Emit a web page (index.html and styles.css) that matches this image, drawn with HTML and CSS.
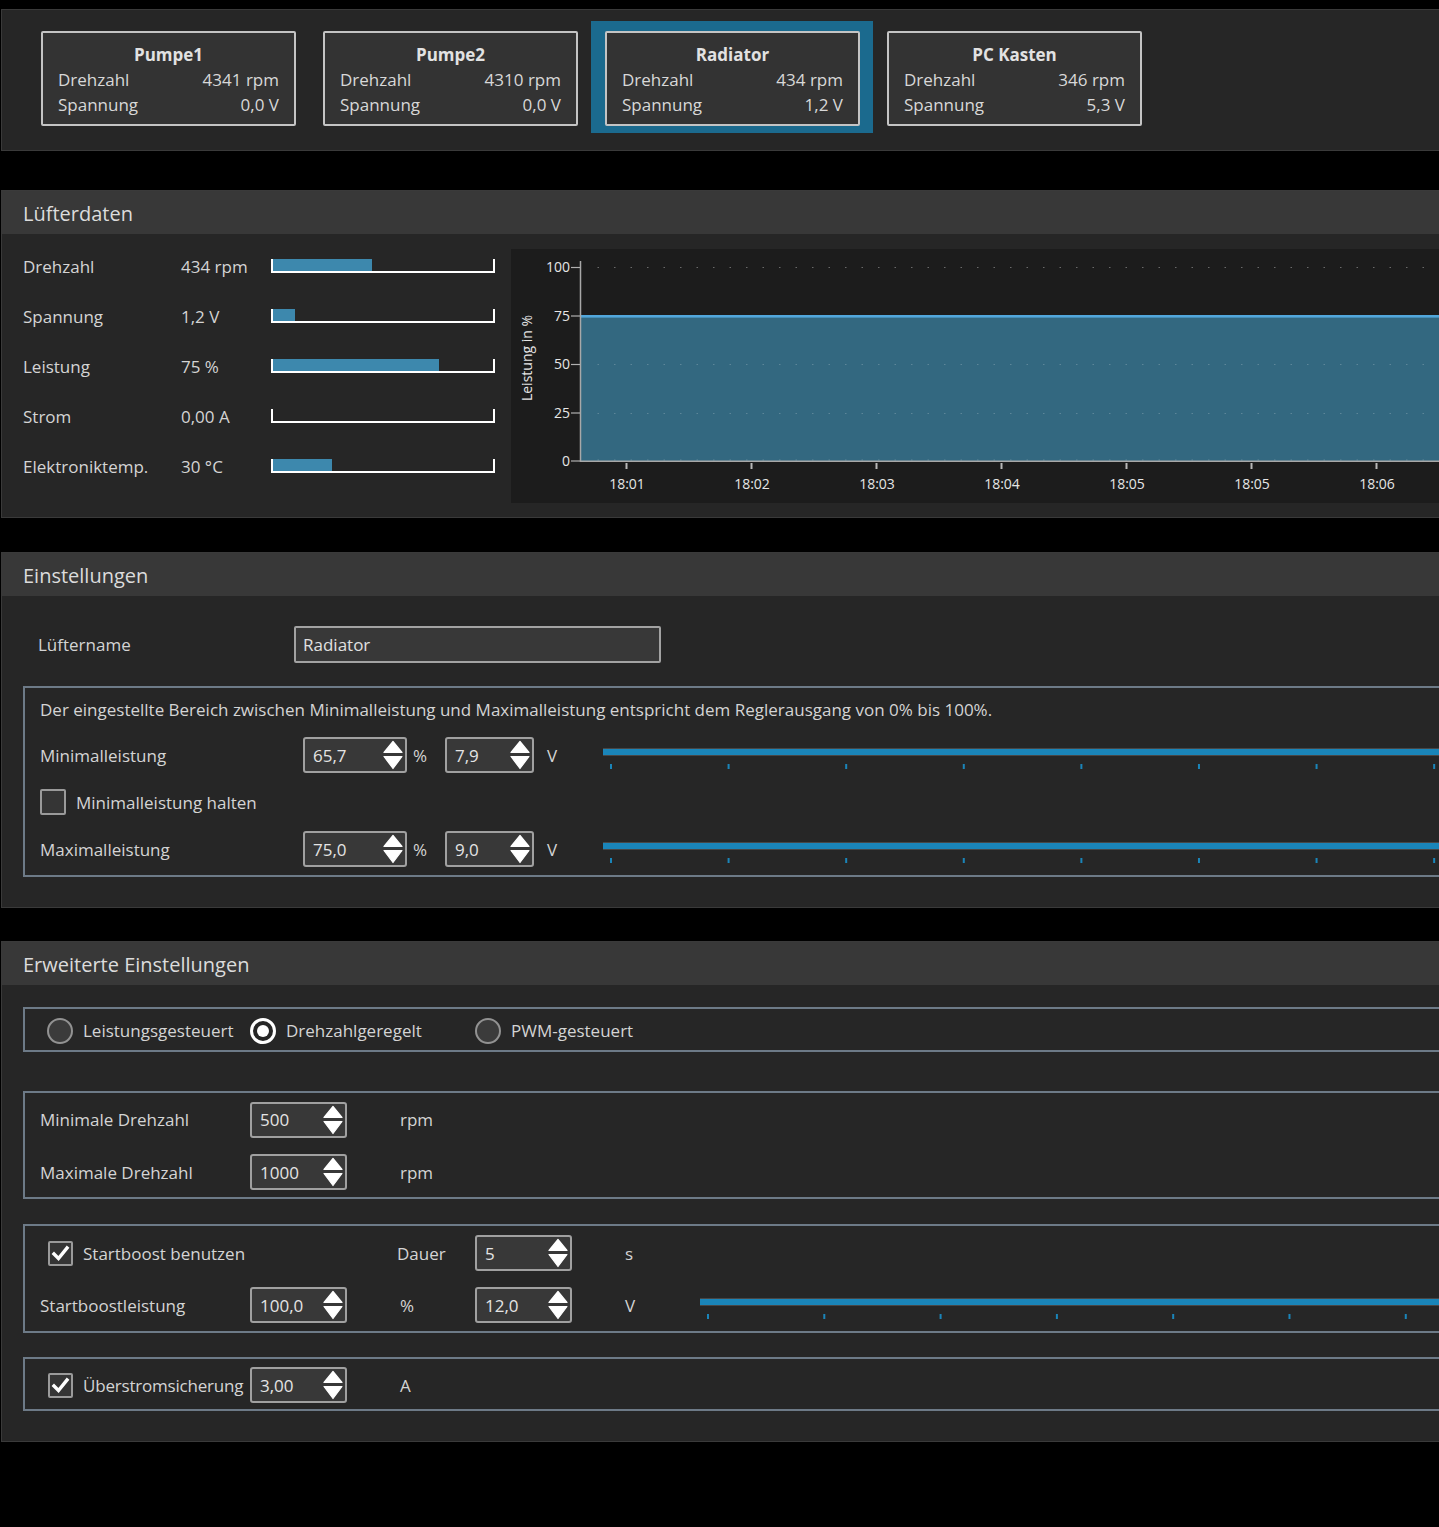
FILE: index.html
```html
<!DOCTYPE html>
<html lang="de">
<head>
<meta charset="utf-8">
<title>Lüftersteuerung</title>
<link rel="stylesheet" href="styles.css">
</head>
<body>
<div class="page">

  <section class="panel top">
    <div class="cards">
      <div class="slot">
        <div class="card">
          <div class="card-title">Pumpe1</div>
          <div class="card-row"><span>Drehzahl</span><span>4341 rpm</span></div>
          <div class="card-row"><span>Spannung</span><span>0,0 V</span></div>
        </div>
      </div>
      <div class="slot">
        <div class="card">
          <div class="card-title">Pumpe2</div>
          <div class="card-row"><span>Drehzahl</span><span>4310 rpm</span></div>
          <div class="card-row"><span>Spannung</span><span>0,0 V</span></div>
        </div>
      </div>
      <div class="slot selected">
        <div class="card">
          <div class="card-title">Radiator</div>
          <div class="card-row"><span>Drehzahl</span><span>434 rpm</span></div>
          <div class="card-row"><span>Spannung</span><span>1,2 V</span></div>
        </div>
      </div>
      <div class="slot">
        <div class="card">
          <div class="card-title">PC Kasten</div>
          <div class="card-row"><span>Drehzahl</span><span>346 rpm</span></div>
          <div class="card-row"><span>Spannung</span><span>5,3 V</span></div>
        </div>
      </div>
    </div>
  </section>

  <section class="panel data">
    <header class="panel-head">Lüfterdaten</header>
    <div class="data-body">
      <div class="metrics">
        <div class="metric"><span>Drehzahl</span><span>434 rpm</span><div class="bar"><div class="fill" style="width:45%"></div></div></div>
        <div class="metric"><span>Spannung</span><span>1,2 V</span><div class="bar"><div class="fill" style="width:10%"></div></div></div>
        <div class="metric"><span>Leistung</span><span>75 %</span><div class="bar"><div class="fill" style="width:75.5%"></div></div></div>
        <div class="metric"><span>Strom</span><span>0,00 A</span><div class="bar"><div class="fill" style="width:0%"></div></div></div>
        <div class="metric"><span>Elektroniktemp.</span><span>30 °C</span><div class="bar"><div class="fill" style="width:27%"></div></div></div>
      </div>
      <div class="chart">
        <svg class="chart-svg" width="1000" height="254" viewBox="0 0 1000 254">
          <rect x="70" y="68" width="930" height="144" fill="#336880"/>
          <rect x="70" y="66" width="930" height="2.6" fill="#52a7db"/>
          <g stroke-dasharray="1.5 15" stroke-width="1">
            <line x1="86.5" y1="18.5" x2="1000" y2="18.5" stroke="#6a6a6a"/>
            <line x1="86.5" y1="115.5" x2="1000" y2="115.5" stroke="#5d8699"/>
            <line x1="86.5" y1="164.5" x2="1000" y2="164.5" stroke="#5d8699"/>
            <line x1="86.5" y1="211" x2="1000" y2="211" stroke="#5d8699"/>
          </g>
          <line x1="69.5" y1="12" x2="69.5" y2="213" stroke="#a8a8a8" stroke-width="1.5"/>
          <line x1="69" y1="212.3" x2="1000" y2="212.3" stroke="#a8a8a8" stroke-width="1.5"/>
          <g stroke="#b0b0b0" stroke-width="1.2">
            <line x1="60" y1="18.5" x2="69" y2="18.5"/>
            <line x1="60" y1="67" x2="69" y2="67"/>
            <line x1="60" y1="115.5" x2="69" y2="115.5"/>
            <line x1="60" y1="164" x2="69" y2="164"/>
            <line x1="60" y1="212" x2="69" y2="212"/>
          </g>
          <g stroke="#b8b8b8" stroke-width="2">
            <line x1="115.5" y1="214" x2="115.5" y2="220"/>
            <line x1="240.5" y1="214" x2="240.5" y2="220"/>
            <line x1="365.5" y1="214" x2="365.5" y2="220"/>
            <line x1="490.5" y1="214" x2="490.5" y2="220"/>
            <line x1="615.5" y1="214" x2="615.5" y2="220"/>
            <line x1="740.5" y1="214" x2="740.5" y2="220"/>
            <line x1="865.5" y1="214" x2="865.5" y2="220"/>
          </g>
          <g class="ax" text-anchor="end">
            <text x="59" y="23">100</text>
            <text x="59" y="71.5">75</text>
            <text x="59" y="120">50</text>
            <text x="59" y="168.5">25</text>
            <text x="59" y="217">0</text>
          </g>
          <g class="ax" text-anchor="middle">
            <text x="116" y="240">18:01</text>
            <text x="241" y="240">18:02</text>
            <text x="366" y="240">18:03</text>
            <text x="491" y="240">18:04</text>
            <text x="616" y="240">18:05</text>
            <text x="741" y="240">18:05</text>
            <text x="866" y="240">18:06</text>
          </g>
          <text class="ax" text-anchor="middle" transform="translate(21 109) rotate(-90)">Leistung in %</text>
        </svg>
      </div>
    </div>
  </section>

  <section class="panel settings">
    <header class="panel-head">Einstellungen</header>
    <div class="settings-body">
      <div class="name-row">
        <span class="name-label">Lüftername</span>
        <div class="textbox">Radiator</div>
      </div>
      <div class="group range-group">
        <div class="hint">Der eingestellte Bereich zwischen Minimalleistung und Maximalleistung entspricht dem Reglerausgang von 0% bis 100%.</div>
        <div class="range-row first">
          <span class="rl">Minimalleistung</span>
          <div class="spin w104"><span>65,7</span><svg class="arr" width="20" height="30" viewBox="0 0 20 30"><polygon points="10,1.5 19,12.5 1,12.5"/><polygon points="1,16.5 19,16.5 10,28.5"/></svg></div>
          <span class="u1">%</span>
          <div class="spin w89"><span>7,9</span><svg class="arr" width="20" height="30" viewBox="0 0 20 30"><polygon points="10,1.5 19,12.5 1,12.5"/><polygon points="1,16.5 19,16.5 10,28.5"/></svg></div>
          <span class="u2">V</span>
          <div class="slider"><div class="track"></div><div class="ticks t1"></div></div>
        </div>
        <div class="check-row">
          <span class="cb"></span><span class="cb-label">Minimalleistung halten</span>
        </div>
        <div class="range-row">
          <span class="rl">Maximalleistung</span>
          <div class="spin w104"><span>75,0</span><svg class="arr" width="20" height="30" viewBox="0 0 20 30"><polygon points="10,1.5 19,12.5 1,12.5"/><polygon points="1,16.5 19,16.5 10,28.5"/></svg></div>
          <span class="u1">%</span>
          <div class="spin w89"><span>9,0</span><svg class="arr" width="20" height="30" viewBox="0 0 20 30"><polygon points="10,1.5 19,12.5 1,12.5"/><polygon points="1,16.5 19,16.5 10,28.5"/></svg></div>
          <span class="u2">V</span>
          <div class="slider"><div class="track"></div><div class="ticks t1"></div></div>
        </div>
      </div>
    </div>
  </section>

  <section class="panel advanced">
    <header class="panel-head">Erweiterte Einstellungen</header>
    <div class="adv-body">
      <div class="group radio-group">
        <label class="radio-item r1"><span class="radio"></span>Leistungsgesteuert</label>
        <label class="radio-item r2"><span class="radio on"></span>Drehzahlgeregelt</label>
        <label class="radio-item"><span class="radio"></span>PWM-gesteuert</label>
      </div>

      <div class="group rpm-group">
        <div class="row">
          <span class="lc">Minimale Drehzahl</span>
          <div class="spin w97"><span>500</span><svg class="arr" width="20" height="30" viewBox="0 0 20 30"><polygon points="10,1.5 19,12.5 1,12.5"/><polygon points="1,16.5 19,16.5 10,28.5"/></svg></div>
          <span class="uc">rpm</span>
        </div>
        <div class="row gap">
          <span class="lc">Maximale Drehzahl</span>
          <div class="spin w97"><span>1000</span><svg class="arr" width="20" height="30" viewBox="0 0 20 30"><polygon points="10,1.5 19,12.5 1,12.5"/><polygon points="1,16.5 19,16.5 10,28.5"/></svg></div>
          <span class="uc">rpm</span>
        </div>
      </div>

      <div class="group boost-group">
        <div class="row">
          <div class="cbwrap wide"><span class="cb on"><svg width="21" height="21" viewBox="0 0 21 21"><path d="M4 11 L8.5 15.5 L17 5"/></svg></span><span class="cb-label">Startboost benutzen</span></div>
          <span class="dauer">Dauer</span>
          <div class="spin w97"><span>5</span><svg class="arr" width="20" height="30" viewBox="0 0 20 30"><polygon points="10,1.5 19,12.5 1,12.5"/><polygon points="1,16.5 19,16.5 10,28.5"/></svg></div>
          <span class="uc">s</span>
        </div>
        <div class="row gap">
          <span class="lc">Startboostleistung</span>
          <div class="spin w97"><span>100,0</span><svg class="arr" width="20" height="30" viewBox="0 0 20 30"><polygon points="10,1.5 19,12.5 1,12.5"/><polygon points="1,16.5 19,16.5 10,28.5"/></svg></div>
          <span class="uc fix">%</span>
          <div class="spin w97"><span>12,0</span><svg class="arr" width="20" height="30" viewBox="0 0 20 30"><polygon points="10,1.5 19,12.5 1,12.5"/><polygon points="1,16.5 19,16.5 10,28.5"/></svg></div>
          <span class="uc fix">V</span>
          <div class="slider"><div class="track"></div><div class="ticks t2"></div></div>
        </div>
      </div>

      <div class="group oc-group">
        <div class="row">
          <div class="cbwrap narrow"><span class="cb on"><svg width="21" height="21" viewBox="0 0 21 21"><path d="M4 11 L8.5 15.5 L17 5"/></svg></span><span class="cb-label tight">Überstromsicherung</span></div>
          <div class="spin w97"><span>3,00</span><svg class="arr" width="20" height="30" viewBox="0 0 20 30"><polygon points="10,1.5 19,12.5 1,12.5"/><polygon points="1,16.5 19,16.5 10,28.5"/></svg></div>
          <span class="uc">A</span>
        </div>
      </div>
    </div>
  </section>

</div>
</body>
</html>
```

FILE: styles.css
```css
* { box-sizing: border-box; }

html, body {
  margin: 0;
  background: #000;
}

body {
  width: 1439px;
  height: 1527px;
  overflow: hidden;
  font-family: "Open Sans", "Noto Sans", sans-serif;
  font-size: 17px;
  color: #d4d4d4;
}

.page {
  padding: 9px 0 0 1px;
  width: 1560px;
}

.panel {
  background: #262626;
  border: 1px solid #3a3a3a;
  border-right: none;
  width: 1520px;
}

.panel-head {
  height: 43px;
  line-height: 45px;
  background: #383838;
  padding-left: 21px;
  font-size: 20px;
  color: #dcdcdc;
}

/* ---------- top cards ---------- */
.top {
  height: 142px;
  padding: 11px 0 0 25px;
}

.cards { display: flex; }

.slot {
  width: 282px;
  height: 112px;
  padding: 10px 13px 7px 14px;
}

.slot.selected { background: #1b6a8e; }

.card {
  height: 95px;
  border: 2px solid #c4c4c4;
  border-radius: 2px;
  background: #333333;
  padding: 9px 15px 0;
  line-height: 25px;
  color: #d8d8d8;
}

.card-title {
  text-align: center;
  font-weight: 700;
  color: #e2e2e2;
}

.card-row {
  display: flex;
  justify-content: space-between;
}

/* ---------- Lüfterdaten ---------- */
.data { margin-top: 39px; }

.data-body {
  display: flex;
  padding: 0 0 14px 21px;
}

.metrics {
  width: 474px;
  padding-top: 7px;
}

.metric {
  display: grid;
  grid-template-columns: 158px 90px 224px;
  align-items: center;
  height: 50px;
}

.bar {
  height: 14px;
  border: 2px solid #ffffff;
  border-top: none;
}

.fill {
  height: 12px;
  background: #3d88ad;
}

.chart {
  flex: 1;
  margin: 15px 0 0 14px;
  height: 254px;
  background: #1c1c1c;
  overflow: hidden;
}

.chart-svg { display: block; }

.ax {
  font-family: "Open Sans", "Noto Sans", sans-serif;
  font-size: 14px;
  fill: #e6e6e6;
}

/* ---------- Einstellungen ---------- */
.settings { margin-top: 34px; }

.settings-body { padding: 30px 0 30px 0; }

.name-row {
  display: flex;
  align-items: center;
  padding-left: 36px;
}

.name-label { width: 256px; }

.textbox {
  width: 367px;
  height: 37px;
  border: 2px solid #a2a2a2;
  border-radius: 2px;
  background: #383838;
  padding-left: 7px;
  line-height: 34px;
  color: #e0e0e0;
}

.group {
  margin-left: 21px;
  border: 2px solid #6d7a87;
  border-right: none;
}

.range-group {
  margin-top: 23px;
  padding: 10px 0 8px 15px;
}

.hint { line-height: 24px; }

.range-row {
  display: flex;
  align-items: flex-start;
  height: 36px;
  margin-top: 16px;
}

.range-row.first { margin-top: 15px; }

.range-row > span { line-height: 37px; }

.rl { width: 263px; }
.u1 { width: 38px; padding-left: 6px; }
.u2 { width: 69px; padding-left: 13px; }

.spin {
  display: flex;
  align-items: center;
  justify-content: space-between;
  height: 36px;
  border: 2px solid #a0a0a0;
  border-radius: 3px;
  background: #383838;
  padding: 0 2px 0 8px;
  color: #e4e4e4;
}

.w104 { width: 104px; }
.w89 { width: 89px; }
.w97 { width: 97px; }

.arr { display: block; }
.arr polygon {
  fill: #ffffff;
  stroke: #ffffff;
  stroke-width: 1.2;
  stroke-linejoin: round;
}

.slider {
  flex: 1;
  height: 36px;
  padding-top: 11px;
}

.track {
  height: 8px;
  border-top: 1px solid #474747;
  border-bottom: 1px solid #474747;
  background: #1a85b9;
}

.ticks {
  height: 5px;
  margin-top: 8px;
  background-repeat: repeat-x;
  background-position: 7px 0;
}

.t1 {
  background-image: linear-gradient(90deg, #1a85b9 0 1.6px, transparent 1.6px);
  background-size: 117.6px 5px;
}

.t2 {
  background-image: linear-gradient(90deg, #1a85b9 0 1.6px, transparent 1.6px);
  background-size: 116.3px 5px;
}

.check-row {
  display: flex;
  align-items: center;
  height: 26px;
  margin-top: 16px;
}

.cb {
  width: 26px;
  height: 26px;
  border: 2px solid #9a9a9a;
  border-radius: 2px;
  background: #353535;
  flex: none;
}

.cb.on {
  width: 25px;
  height: 25px;
  display: flex;
  align-items: center;
  justify-content: center;
}

.cb.on svg path {
  fill: none;
  stroke: #ffffff;
  stroke-width: 3.4;
  stroke-linecap: square;
}

.cb-label { margin-left: 10px; }
.cb-label.tight { letter-spacing: -0.2px; }

/* ---------- Erweiterte Einstellungen ---------- */
.advanced { margin-top: 33px; }

.adv-body { padding: 22px 0 30px 0; }

.radio-group {
  display: flex;
  align-items: center;
  height: 45px;
  padding: 2px 0 0 22px;
}

.radio-item {
  display: flex;
  align-items: center;
}

.r1 { width: 203px; }
.r2 { width: 225px; }

.radio {
  width: 26px;
  height: 26px;
  border-radius: 50%;
  border: 2px solid #929292;
  background: #3b3b3b;
  margin-right: 10px;
  flex: none;
}

.radio.on {
  border: 3px solid #ffffff;
  background: #262626;
  display: flex;
  align-items: center;
  justify-content: center;
}

.radio.on::after {
  content: "";
  width: 12px;
  height: 12px;
  border-radius: 50%;
  background: #ffffff;
}

.row {
  display: flex;
  align-items: center;
  height: 36px;
}

.row.gap { margin-top: 16px; }

.lc { width: 210px; }
.uc { padding-left: 53px; }
.uc.fix { width: 128px; }
.dauer { width: 78px; }

.cbwrap {
  display: flex;
  align-items: center;
  padding-left: 8px;
}

.cbwrap.wide { width: 357px; }
.cbwrap.narrow { width: 210px; }

.rpm-group {
  margin-top: 39px;
  padding: 8px 0 7px 15px;
}

.rpm-group .row:first-child { height: 37px; }

.boost-group {
  margin-top: 25px;
  padding: 9px 0 8px 15px;
}

.oc-group {
  margin-top: 24px;
  padding: 8px 0 6px 15px;
}
```
